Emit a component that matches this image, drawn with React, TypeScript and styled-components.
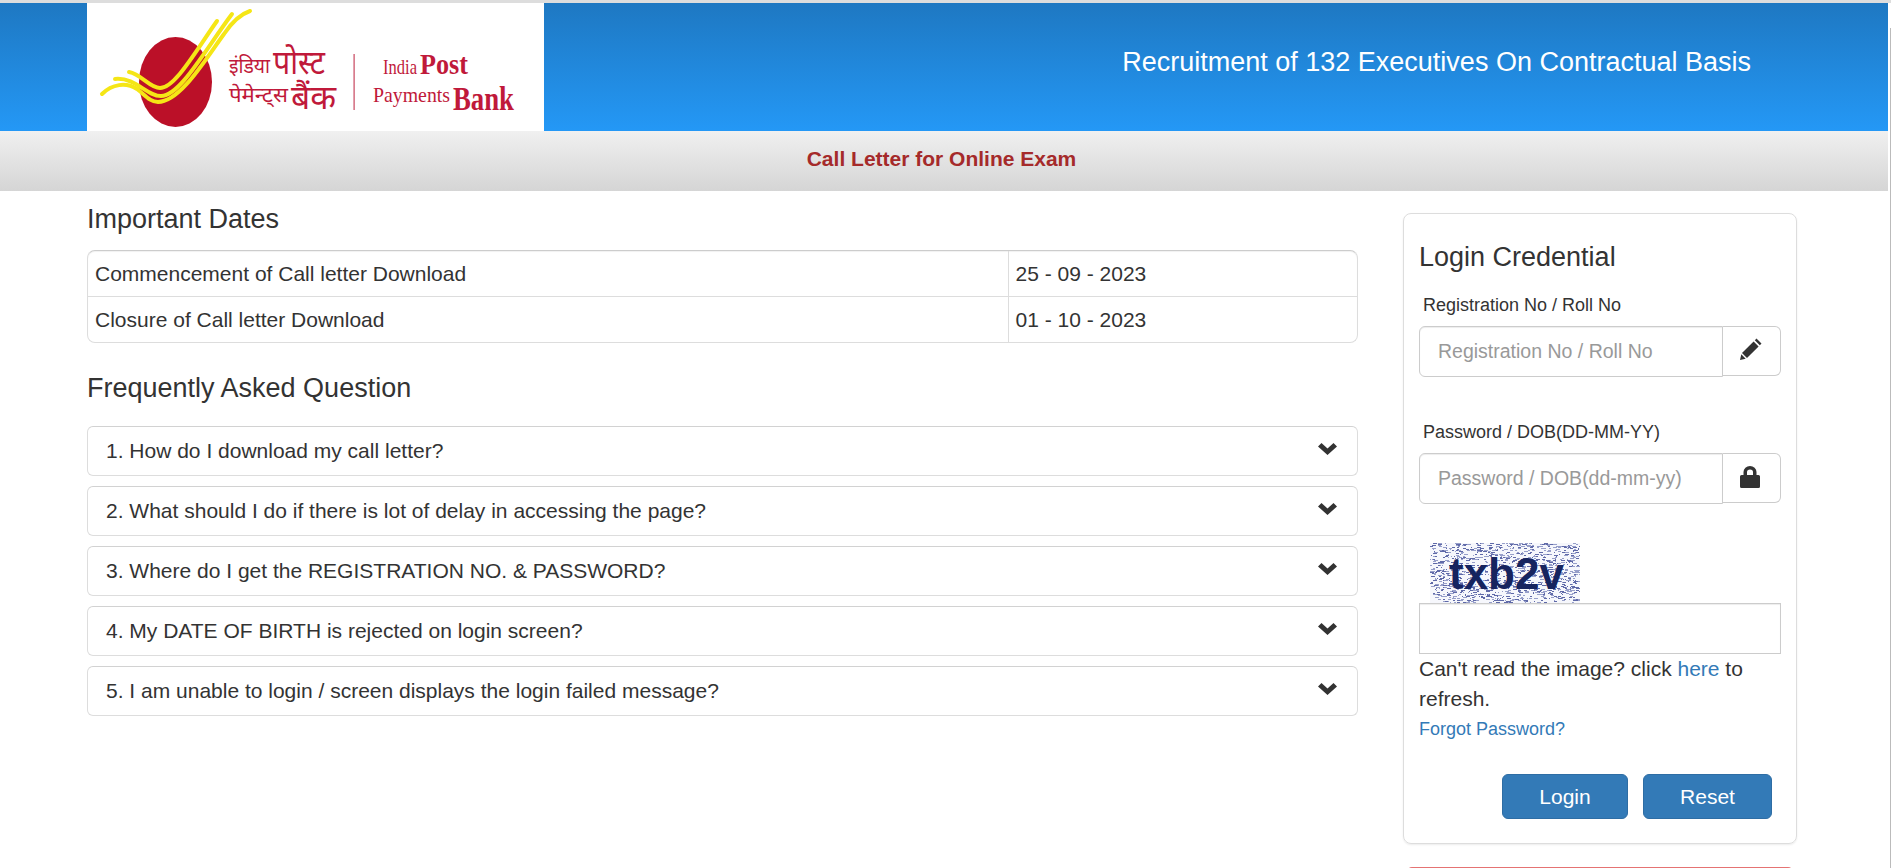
import React from "react";
import styled, { createGlobalStyle } from "styled-components";

const Global = createGlobalStyle`
  html, body { margin: 0; padding: 0; height: 868px; overflow: hidden; background: #fff; }
  body { font-family: "Liberation Sans", Arial, sans-serif; color: #333; }
  * { box-sizing: border-box; }
`;

const TopStrip = styled.div`height: 3px; background: #ddd;`;
const Shell = styled.div`display: flex; height: 865px; overflow: hidden;`;
const Page = styled.div`width: 1888px; flex: none;`;
const ScrollEdge = styled.div`
  flex: 1; margin-top: 25px; display: flex; justify-content: flex-end;
  &::after { content: ""; width: 1px; background: #bbb; }
`;
const Header = styled.header`
  height: 128px; padding: 0 137px 0 87px; display: flex; align-items: center; justify-content: space-between;
  background: linear-gradient(#1e78c2, #2498f6);
`;
const LogoBox = styled.div`width: 457px; height: 128px; background: #fff; flex: none;`;
const Title = styled.h1`margin: 0 0 11px; font-size: 27px; line-height: 30px; font-weight: 400; color: #fff;`;
const Band = styled.div`
  height: 60px; padding: 0 5px 5px 0; display: flex; align-items: center; justify-content: center;
  background: linear-gradient(#f0f0f0, #d5d5d5);
  font-size: 21px; font-weight: 700; color: #a52a2a;
`;
const Content = styled.main`display: flex; padding-left: 87px; gap: 45px; align-items: flex-start;`;
const LeftCol = styled.section`width: 1271px; padding-top: 11px; flex: none;`;
const Heading = styled.h2`margin: 0; font-size: 27px; line-height: 34px; font-weight: 400; color: #333;`;
const DatesBox = styled.div`
  margin-top: 14px; height: 93px; border: 1px solid #ddd; border-top-color: #ccc; border-radius: 8px; overflow: hidden;
  box-shadow: inset 0 1px 1px rgba(0,0,0,.06);
`;
const DatesTable = styled.table`width: 100%; height: 100%; border-collapse: collapse; table-layout: fixed;`;
const Row = styled.tr`& + & td { border-top: 1px solid #ddd; }`;
const Cell = styled.td<{ $w?: number }>`
  padding: 0 7px; font-size: 21px; line-height: 24px; color: #333;
  ${(p) => (p.$w ? `width: ${p.$w}px; border-right: 1px solid #ddd;` : "")}
`;
const FaqHeading = styled(Heading)`margin-top: 28px;`;
const FaqList = styled.div`margin-top: 21px; display: flex; flex-direction: column; gap: 10px;`;
const FaqItem = styled.div`
  height: 50px; border: 1px solid #ddd; border-top-color: #d2d2d2; border-radius: 6px; padding: 0 20px 0 18px;
  display: flex; align-items: center; justify-content: space-between; font-size: 21px; color: #333;
`;
const Chevron = styled.svg`width: 19px; height: 13px; fill: #333; margin-top: -5px; flex: none;`;

const Side = styled.aside`width: 394px; padding-top: 22px; flex: none;`;
const Panel = styled.div`
  height: 631px; border: 1px solid #ddd; border-radius: 8px; padding: 28px 15px 0; box-shadow: 0 1px 2px rgba(0,0,0,.08);
`;
const PanelTitle = styled.h3`margin: 0; font-size: 27px; line-height: 30px; font-weight: 400; color: #333;`;
const FieldLabel = styled.label<{ $top: number }>`
  display: block; margin-top: ${(p) => p.$top}px; padding-left: 4px; font-size: 18px; line-height: 20px; color: #333;
`;
const InputGroup = styled.div`display: flex; margin-top: 11px; align-items: flex-start;`;
const TextField = styled.input`
  width: 304px; height: 51px; padding: 0 18px; border: 1px solid #ccc; border-radius: 6px 0 0 6px; outline: none;
  font: 19.5px "Liberation Sans", Arial, sans-serif; color: #555; background: #fff;
  box-shadow: inset 0 1px 1px rgba(0,0,0,.075);
  &::placeholder { color: #999; opacity: 1; }
`;
const Addon = styled.div`
  width: 58px; height: 50px; border: 1px solid #ccc; border-left: 0; border-radius: 0 6px 6px 0;
  display: flex; align-items: center; padding-left: 17px;
`;
const Icon = styled.svg<{ $lift: number }>`fill: #333; display: block; margin-top: -${(p) => p.$lift}px;`;
const CaptchaBox = styled.div`margin: 39px 0 0 11px; width: 150px; height: 60px; position: relative; overflow: hidden; display: block;`;
const CaptchaNoise = styled.svg`display: block; width: 150px; height: 60px;`;
const CaptchaText = styled.span`
  position: absolute; left: 19px; top: 6px; font: 700 44px/50px "Liberation Sans", Arial, sans-serif; letter-spacing: 0;
  color: #16245f;
`;
const CaptchaInput = styled.input`
  display: block; width: 362px; height: 51px; border: 1px solid #ccc; border-radius: 0; outline: none;
  box-shadow: inset 0 1px 1px rgba(0,0,0,.075);
`;
const Hint = styled.p`margin: 0; font-size: 21px; line-height: 30px; color: #333;`;
const LinkText = styled.a`color: #337ab7; text-decoration: none;`;
const Forgot = styled.a`display: block; margin-top: 5px; font-size: 18px; line-height: 20px; color: #337ab7; text-decoration: none;`;
const Actions = styled.div`display: flex; gap: 15px; margin: 35px 0 0 83px;`;
const Btn = styled.button<{ $w: number }>`
  width: ${(p) => p.$w}px; height: 45px; border: 1px solid #2e6da4; border-radius: 6px; background: #337ab7; color: #fff;
  font: 21px "Liberation Sans", Arial, sans-serif; padding: 0;
`;
const NextBox = styled.div`margin: 23px 5px 0; height: 8px; border-top: 1px solid #e57373; border-radius: 4px 4px 0 0;`;

const noise = (() => {
  let s = 12345;
  const r = () => ((s = (s * 1103515245 + 12345) & 0x7fffffff) / 0x7fffffff);
  const out: { x: number; y: number; w: number; c: string }[] = [];
  for (let i = 0; i < 1300; i++) {
    out.push({ x: Math.floor(r() * 150), y: Math.floor(r() * 60), w: 1 + Math.floor(r() * 4), c: r() > 0.5 ? "#5f69a8" : "#979fca" });
  }
  return out;
})();

const Logo = () => (
  <svg width="457" height="128" viewBox="87 3 457 128" role="img" aria-label="India Post Payments Bank">
    <ellipse cx="175.5" cy="82" rx="36.5" ry="45" fill="#bb1028" />
    <g fill="none" stroke="#f5e616" strokeWidth="4" strokeLinecap="round">
      <path d="M129 72C141 74 150 88 160 88C175 88 195 52 217 21" />
      <path d="M115 79C136 77 146 96 161 96C180 96 205 50 232 14" />
      <path d="M102 94C112 84 126 82 137 89C145 95 150 102 158 102C180 102 205 60 224 34C232 22 241 14 250 11" />
    </g>
    <g fill="#c0193a" fontFamily="'Noto Sans', 'Liberation Serif', serif">
      <text x="229" y="73" fontSize="21" textLength="41" lengthAdjust="spacingAndGlyphs">इंडिया</text>
      <text x="273" y="74" fontSize="33" textLength="52" lengthAdjust="spacingAndGlyphs">पोस्ट</text>
      <text x="229" y="102" fontSize="21" textLength="59" lengthAdjust="spacingAndGlyphs">पेमेन्ट्स</text>
      <text x="291" y="109" fontSize="33" textLength="45" lengthAdjust="spacingAndGlyphs">बैंक</text>
    </g>
    <rect x="353.5" y="54" width="1.2" height="56" fill="#c8475f" />
    <g fill="#c0193a" fontFamily="'Liberation Serif', serif">
      <text x="383" y="74" fontSize="21" textLength="34" lengthAdjust="spacingAndGlyphs">India</text>
      <text x="420" y="74" fontSize="29" fontWeight="700" textLength="48" lengthAdjust="spacingAndGlyphs">Post</text>
      <text x="373" y="102" fontSize="22" textLength="77" lengthAdjust="spacingAndGlyphs">Payments</text>
      <text x="453" y="110" fontSize="33" fontWeight="700" textLength="61" lengthAdjust="spacingAndGlyphs">Bank</text>
    </g>
  </svg>
);

const faqs = [
  "1. How do I download my call letter?",
  "2. What should I do if there is lot of delay in accessing the page?",
  "3. Where do I get the REGISTRATION NO. & PASSWORD?",
  "4. My DATE OF BIRTH is rejected on login screen?",
  "5. I am unable to login / screen displays the login failed message?",
];

export default function App() {
  return (
    <>
      <Global />
      <TopStrip />
      <Shell>
        <Page>
          <Header>
            <LogoBox><Logo /></LogoBox>
            <Title>Recruitment of 132 Executives On Contractual Basis</Title>
          </Header>
          <Band>Call Letter for Online Exam</Band>
          <Content>
            <LeftCol>
              <Heading>Important Dates</Heading>
              <DatesBox>
                <DatesTable>
                  <tbody>
                    <Row><Cell $w={920}>Commencement of Call letter Download</Cell><Cell>25 - 09 - 2023</Cell></Row>
                    <Row><Cell $w={920}>Closure of Call letter Download</Cell><Cell>01 - 10 - 2023</Cell></Row>
                  </tbody>
                </DatesTable>
              </DatesBox>
              <FaqHeading>Frequently Asked Question</FaqHeading>
              <FaqList>
                {faqs.map((q) => (
                  <FaqItem key={q}>
                    <span>{q}</span>
                    <Chevron viewBox="0 0 19 13"><path d="M0 4.5 3.5 1 9.5 6.5 15.5 1 19 4.5 9.5 13Z" /></Chevron>
                  </FaqItem>
                ))}
              </FaqList>
            </LeftCol>
            <Side>
              <Panel>
                <PanelTitle>Login Credential</PanelTitle>
                <FieldLabel $top={23}>Registration No / Roll No</FieldLabel>
                <InputGroup>
                  <TextField placeholder="Registration No / Roll No" />
                  <Addon>
                    <Icon $lift={5} width="22" height="22" viewBox="0 0 22 22">
                      <path d="M16.5 0.5 21.5 5.5 19.8 7.2 14.8 2.2ZM13.6 3.4 18.6 8.4 7 20 2 15ZM1.3 16.3 5.7 20.7 0 22Z" />
                    </Icon>
                  </Addon>
                </InputGroup>
                <FieldLabel $top={45}>Password / DOB(DD-MM-YY)</FieldLabel>
                <InputGroup>
                  <TextField placeholder="Password / DOB(dd-mm-yy)" />
                  <Addon>
                    <Icon $lift={3} width="20" height="22" viewBox="0 0 20 22">
                      <path fillRule="evenodd" d="M3.5 9V6a6.5 6 0 0 1 13 0v3h2a1.5 1.5 0 0 1 1.5 1.5v10a1.5 1.5 0 0 1-1.5 1.5H1.500a1.500 1.500 0 0 1-1.500-1.500v-10a1.500 1.500 0 0 1 1.500-1.500ZM7 9h6V6.200a3 2.800 0 0 0-6 0Z" />
                    </Icon>
                  </Addon>
                </InputGroup>
                <CaptchaBox>
                  <CaptchaNoise viewBox="0 0 150 60">
                    <rect width="150" height="60" fill="#f6f7fc" />
                    {noise.map((n, i) => <rect key={i} x={n.x} y={n.y} width={n.w} height="1" fill={n.c} />)}
                  </CaptchaNoise>
                  <CaptchaText>txb2v</CaptchaText>
                </CaptchaBox>
                <CaptchaInput />
                <Hint>Can't read the image? click <LinkText href="#">here</LinkText> to refresh.</Hint>
                <Forgot href="#">Forgot Password?</Forgot>
                <Actions>
                  <Btn $w={126}>Login</Btn>
                  <Btn $w={129}>Reset</Btn>
                </Actions>
              </Panel>
              <NextBox />
            </Side>
          </Content>
        </Page>
        <ScrollEdge />
      </Shell>
    </>
  );
}
